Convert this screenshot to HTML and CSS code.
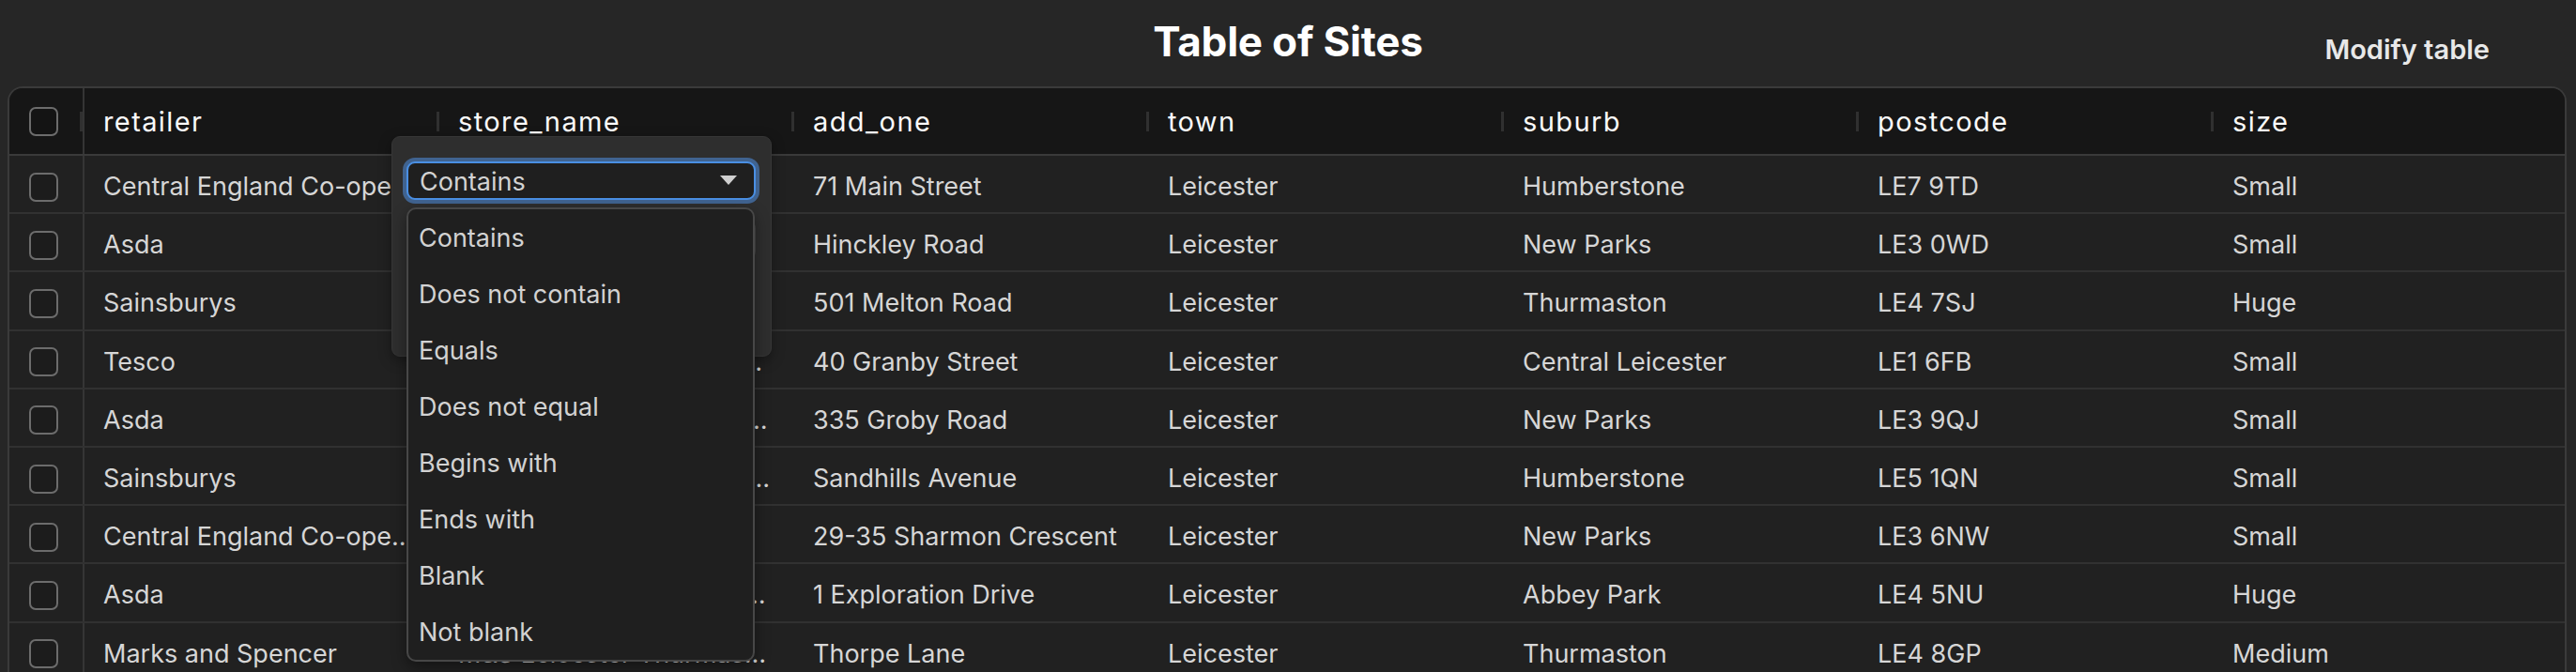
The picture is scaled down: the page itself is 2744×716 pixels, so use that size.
FILE: index.html
```html
<!DOCTYPE html>
<html lang="en">
<head>
<meta charset="utf-8">
<title>Table of Sites</title>
<link rel="stylesheet" href="styles.css">
</head>
<body>
<div class="page">
  <header class="topbar">
    <div class="topbar-spacer"></div>
    <h1 class="title">Table of Sites</h1>
    <div class="actions"><button class="modify" type="button">Modify table</button></div>
  </header>

  <section class="grid">
    <div class="row head">
      <div class="cell check"><span class="box"></span><span class="handle"></span></div>
      <div class="cell"><span class="label">retailer</span><span class="handle"></span></div>
      <div class="cell"><span class="label">store_name</span><span class="handle"></span></div>
      <div class="cell"><span class="label">add_one</span><span class="handle"></span></div>
      <div class="cell"><span class="label">town</span><span class="handle"></span></div>
      <div class="cell"><span class="label">suburb</span><span class="handle"></span></div>
      <div class="cell"><span class="label">postcode</span><span class="handle"></span></div>
      <div class="cell"><span class="label">size</span><span class="handle"></span></div>
    </div>

    <div class="body">
      <div class="row">
        <div class="cell check"><span class="box"></span></div>
        <div class="cell">Central England Co-operative</div>
        <div class="cell">Co-op Humberstone Main Street Food Store</div>
        <div class="cell">71 Main Street</div>
        <div class="cell">Leicester</div>
        <div class="cell">Humberstone</div>
        <div class="cell">LE7 9TD</div>
        <div class="cell">Small</div>
      </div>
      <div class="row">
        <div class="cell check"><span class="box"></span></div>
        <div class="cell">Asda</div>
        <div class="cell">Asda Express Hinckley Road Petrol Station</div>
        <div class="cell">Hinckley Road</div>
        <div class="cell">Leicester</div>
        <div class="cell">New Parks</div>
        <div class="cell">LE3 0WD</div>
        <div class="cell">Small</div>
      </div>
      <div class="row">
        <div class="cell check"><span class="box"></span></div>
        <div class="cell">Sainsburys</div>
        <div class="cell">Sainsburys Leicester Melton Road Superstore</div>
        <div class="cell">501 Melton Road</div>
        <div class="cell">Leicester</div>
        <div class="cell">Thurmaston</div>
        <div class="cell">LE4 7SJ</div>
        <div class="cell">Huge</div>
      </div>
      <div class="row">
        <div class="cell check"><span class="box"></span></div>
        <div class="cell">Tesco</div>
        <div class="cell">Tesco Express Leicester Granby St</div>
        <div class="cell">40 Granby Street</div>
        <div class="cell">Leicester</div>
        <div class="cell">Central Leicester</div>
        <div class="cell">LE1 6FB</div>
        <div class="cell">Small</div>
      </div>
      <div class="row">
        <div class="cell check"><span class="box"></span></div>
        <div class="cell">Asda</div>
        <div class="cell">Asda Express Leicester Groby Road Petrol</div>
        <div class="cell">335 Groby Road</div>
        <div class="cell">Leicester</div>
        <div class="cell">New Parks</div>
        <div class="cell">LE3 9QJ</div>
        <div class="cell">Small</div>
      </div>
      <div class="row">
        <div class="cell check"><span class="box"></span></div>
        <div class="cell">Sainsburys</div>
        <div class="cell">Sainsburys Local Leicester Sandhills Avenue</div>
        <div class="cell">Sandhills Avenue</div>
        <div class="cell">Leicester</div>
        <div class="cell">Humberstone</div>
        <div class="cell">LE5 1QN</div>
        <div class="cell">Small</div>
      </div>
      <div class="row">
        <div class="cell check"><span class="box"></span></div>
        <div class="cell">Central England Co-operative</div>
        <div class="cell">Co-op New Parks Sharmon Crescent</div>
        <div class="cell">29-35 Sharmon Crescent</div>
        <div class="cell">Leicester</div>
        <div class="cell">New Parks</div>
        <div class="cell">LE3 6NW</div>
        <div class="cell">Small</div>
      </div>
      <div class="row">
        <div class="cell check"><span class="box"></span></div>
        <div class="cell">Asda</div>
        <div class="cell">Asda Leicester Abbey Park Superstor</div>
        <div class="cell">1 Exploration Drive</div>
        <div class="cell">Leicester</div>
        <div class="cell">Abbey Park</div>
        <div class="cell">LE4 5NU</div>
        <div class="cell">Huge</div>
      </div>
      <div class="row">
        <div class="cell check"><span class="box"></span></div>
        <div class="cell">Marks and Spencer</div>
        <div class="cell">M&amp;S Leicester Thurmaston Simply Food</div>
        <div class="cell">Thorpe Lane</div>
        <div class="cell">Leicester</div>
        <div class="cell">Thurmaston</div>
        <div class="cell">LE4 8GP</div>
        <div class="cell">Medium</div>
      </div>
    </div>

    <!-- column filter for store_name -->
    <div class="filter">
      <div class="select">
        <span class="select-value">Contains</span>
        <svg class="caret" width="18" height="10" viewBox="0 0 18 10"><path d="M0 0 H18 L9 10 Z" fill="#cfcfcf"/></svg>
      </div>
      <div class="filter-input"></div>
      <ul class="options">
        <li>Contains</li>
        <li>Does not contain</li>
        <li>Equals</li>
        <li>Does not equal</li>
        <li>Begins with</li>
        <li>Ends with</li>
        <li>Blank</li>
        <li>Not blank</li>
      </ul>
    </div>
  </section>
</div>
</body>
</html>
```

FILE: styles.css
```css
* { box-sizing: border-box; }

html, body {
  margin: 0;
  padding: 0;
  height: 100%;
  background: #262626;
  overflow: hidden;
}

.page {
  height: 100vh;
  display: flex;
  flex-direction: column;
  font-family: Inter, "Liberation Sans", sans-serif;
  color: #d6d6d6;
}

/* ---------- title bar ---------- */
.topbar {
  height: 92px;
  flex: none;
  display: grid;
  grid-template-columns: 1fr auto 1fr;
  align-items: start;
}

.title {
  margin: 17px 0 0;
  font-size: 44px;
  line-height: 54px;
  font-weight: 700;
  color: #ffffff;
  letter-spacing: -0.2px;
}

.actions {
  display: flex;
  justify-content: flex-end;
  padding-right: 92px;
}

.modify {
  margin-top: 35px;
  padding: 0;
  border: 0;
  background: none;
  font-family: inherit;
  font-size: 29px;
  line-height: 35px;
  font-weight: 600;
  color: #e8e8e8;
}

/* ---------- data grid ---------- */
.grid {
  position: relative;
  flex: 1;
  margin: 0 10px 0 8px;
  border: 2px solid #3a3a3a;
  border-bottom: 0;
  border-radius: 16px 16px 0 0;
  background: #212121;
  overflow: hidden;
}

.row {
  display: grid;
  grid-template-columns: 80px repeat(7, 378px);
  height: 62.2px;
  border-bottom: 2px solid #313131;
  font-size: 27px;
}

.row.head {
  height: 72px;
  background: #161616;
  border-bottom-color: #3a3a3a;
  color: #fafafa;
  font-size: 29px;
  letter-spacing: 1.4px;
}

.cell {
  display: block;
  min-width: 0;
  padding: 6px 24px 0 20px;
  white-space: nowrap;
  overflow: hidden;
  text-overflow: ellipsis;
  line-height: 54px;
}

.head .cell {
  display: flex;
  align-items: center;
  justify-content: space-between;
  padding: 1px 0 0 20px;
  line-height: normal;
}

.head .label {
  flex: none;
}

.handle {
  flex: none;
  width: 3px;
  height: 21px;
  background: #303030;
}

.cell.check {
  display: flex;
  align-items: center;
  padding: 6px 0 0 21px;
  border-right: 2px solid #353535;
}

.head .cell.check {
  padding: 0 0 0 21px;
}

.box {
  flex: none;
  width: 31px;
  height: 31px;
  border: 2px solid #6c6c6c;
  border-radius: 7px;
  background: #1c1c1c;
}

.head .box {
  background: #141414;
}

/* ---------- filter popup ---------- */
.filter {
  position: absolute;
  left: 407px;
  top: 51px;
  width: 405px;
  height: 235px;
  padding: 26px 16px 0 15px;
  background: #2e2e2e;
  border: 1px solid #363636;
  border-radius: 9px;
  box-shadow: 0 4px 14px rgba(0, 0, 0, 0.35);
  letter-spacing: 0;
}

.select {
  display: flex;
  align-items: center;
  justify-content: space-between;
  height: 41px;
  padding: 2px 18px 0 12px;
  border: 2px solid #4a8fe3;
  border-radius: 9px;
  background: #1f1f1f;
  box-shadow: 0 0 0 4px rgba(74, 128, 196, 0.65);
  font-size: 27px;
  color: #d2d2d2;
}

.caret {
  display: block;
  margin-top: -4px;
}

.filter-input {
  height: 41px;
  margin-top: 22px;
  border: 2px solid #444;
  border-radius: 8px;
  background: #1f1f1f;
}

.options {
  position: absolute;
  left: 15px;
  top: 75px;
  width: 371px;
  margin: 0;
  padding: 0;
  list-style: none;
  background: #1f1f1f;
  border: 2px solid #474747;
  border-radius: 10px;
  box-shadow: 0 6px 16px rgba(0, 0, 0, 0.4);
}

.options li {
  height: 60px;
  padding: 2px 0 0 11px;
  font-size: 27px;
  line-height: 58px;
  color: #d2d2d2;
}
```
